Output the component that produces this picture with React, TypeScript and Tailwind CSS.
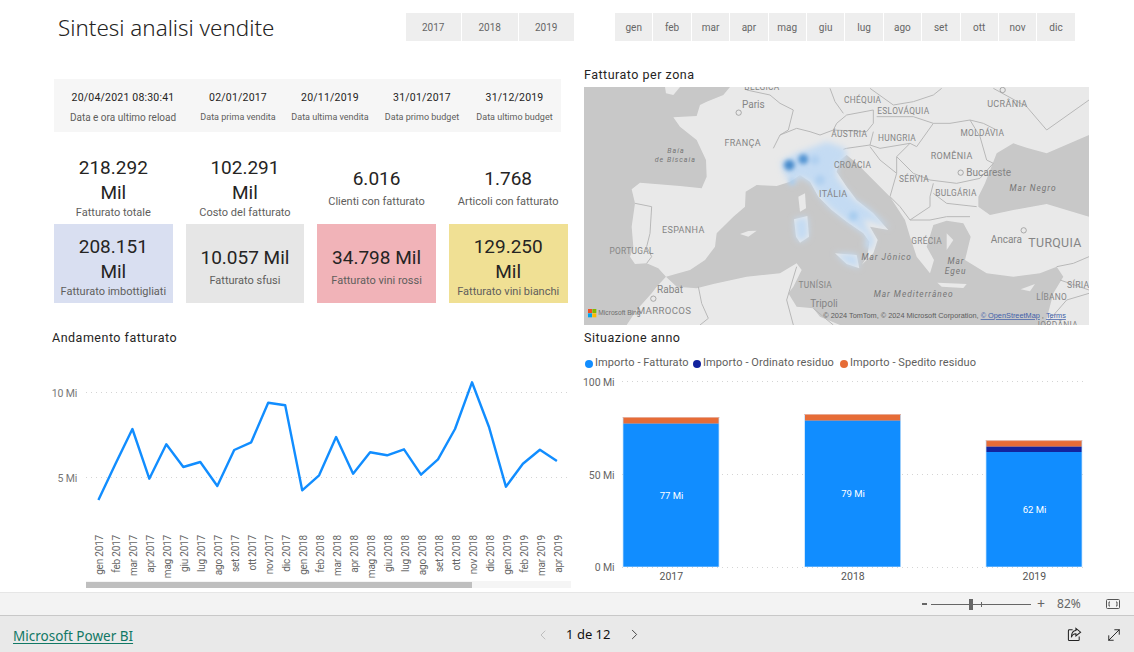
import React from "react";
import { ChevronLeft, ChevronRight, MoveDiagonal } from "lucide-react";

const din = "font-['Roboto',sans-serif]";
const years = ["2017", "2018", "2019"];
const months = ["gen", "feb", "mar", "apr", "mag", "giu", "lug", "ago", "set", "ott", "nov", "dic"];

const infos = [
  { value: "20/04/2021 08:30:41", label: "Data e ora ultimo reload", w: "w-[138px]", size: "text-[10px]" },
  { value: "02/01/2017", label: "Data prima vendita", w: "w-[92px]", size: "text-[9px]" },
  { value: "20/11/2019", label: "Data ultima vendita", w: "w-[92px]", size: "text-[9px]" },
  { value: "31/01/2017", label: "Data primo budget", w: "w-[92px]", size: "text-[9px]" },
  { value: "31/12/2019", label: "Data ultimo budget", w: "w-[93px]", size: "text-[9px]" },
];

const kpis = [
  { value: "218.292 Mil", label: "Fatturato totale", bg: "bg-white", two: true },
  { value: "102.291 Mil", label: "Costo del fatturato", bg: "bg-white", two: true },
  { value: "6.016", label: "Clienti con fatturato", bg: "bg-white", two: false },
  { value: "1.768", label: "Articoli con fatturato", bg: "bg-white", two: false },
  { value: "208.151 Mil", label: "Fatturato imbottigliati", bg: "bg-[#d9dff1]", two: true },
  { value: "10.057 Mil", label: "Fatturato sfusi", bg: "bg-[#e6e6e6]", two: false },
  { value: "34.798 Mil", label: "Fatturato vini rossi", bg: "bg-[#f1b3b8]", two: false },
  { value: "129.250 Mil", label: "Fatturato vini bianchi", bg: "bg-[#f0e094]", two: true },
];

const linePoints = [
  500, 464, 429, 478.7, 444.3, 467, 462, 486, 450, 442.3, 402.7, 405.3, 490.3, 475.3, 437, 473.7, 452.3,
  455.3, 449.3, 474.7, 459.3, 429, 382.3, 426.7, 486.7, 463.7, 449.7, 461,
];
const lineLabels = [
  "gen 2017", "feb 2017", "mar 2017", "apr 2017", "mag 2017", "giu 2017", "lug 2017", "ago 2017", "set 2017",
  "ott 2017", "nov 2017", "dic 2017", "gen 2018", "feb 2018", "mar 2018", "apr 2018", "mag 2018", "giu 2018",
  "lug 2018", "ago 2018", "set 2018", "ott 2018", "nov 2018", "dic 2018", "gen 2019", "feb 2019", "mar 2019",
  "apr 2019",
];

const bars = [
  { x: 622.7, year: "2017", label: "77 Mi", top: 417, navy: 423.7, blue: 423.7, ly: 495.3 },
  { x: 804.3, year: "2018", label: "79 Mi", top: 414, navy: 420.7, blue: 420.7, ly: 493.7 },
  { x: 985.7, year: "2019", label: "62 Mi", top: 440.3, navy: 446.7, blue: 452, ly: 509.3 },
];

const borders = [
  "M580 265L600 225L650 205L690 215L720 225L760 210L860 215L880 190L880 150",
  "M600 225L625 210L640 150L600 130L570 105L500 90",
  "M880 150L800 165L770 190L760 210",
  "M750 85L765 125L790 160",
  "M870 85L940 135L1000 125L1060 105L1085 85",
  "M890 170L1000 170L1060 190L1110 190L1170 180L1210 190L1250 210",
  "M1060 190L1010 260L990 250L900 265L870 255L880 215",
  "M870 255L800 265L790 268",
  "M990 250L950 290L1000 340L1050 360L1130 370L1200 355L1240 310",
  "M1170 180L1200 230L1220 300L1240 310",
  "M950 290L950 340L930 410L960 440L990 480L1050 440L1050 410L1060 370",
  "M870 260L900 300L950 340",
  "M1060 400L1100 430L1190 440",
  "M990 480L1050 480L1100 470L1170 470",
  "M1430 620L1480 610L1527 590",
  "M1440 660L1527 690",
  "M165 430L215 440L210 520L200 560L215 590L200 610",
  "M355 680L365 730L385 775L360 795",
  "M650 620L620 720L640 795",
  "M700 745L760 795",
  "M1395 795L1460 720L1527 700",
  "M1240 85L1340 140L1400 210L1527 120",
];

function HeatMap() {
  return (
    <svg viewBox="12 81 1515 714" className="block h-[238px] w-[505px] bg-[#e9e9e9]">
      <defs>
        <filter id="soft" x="-5%" y="-5%" width="110%" height="110%">
          <feGaussianBlur stdDeviation="1" />
        </filter>
        <filter id="heat" x="-30%" y="-30%" width="160%" height="160%">
          <feGaussianBlur stdDeviation="10" />
        </filter>
        <filter id="spot" x="-80%" y="-80%" width="260%" height="260%">
          <feGaussianBlur stdDeviation="7" />
        </filter>
      </defs>
      <g filter="url(#soft)">
        {/* mare */}
        <path
          fill="#c8c8c8"
          d="M12 81L450 81L430 105L380 125L360 135L350 168L280 172L300 200L350 240L378 300L380 350L365 385L300 378L180 368L155 388L165 430L155 500L160 560L150 590L165 612L200 610L235 625L258 650L230 680L215 700L170 750L140 795L12 795Z"
        />
        <path
          fill="#c8c8c8"
          d="M258 650L330 630L375 600L405 560L410 520L460 470L495 440L497 395L530 375L590 378L630 365L660 345L690 365L715 410L755 450L800 485L850 520L868 545L862 590L845 615L880 580L893 540L870 500L925 510L880 460L830 420L800 380L770 335L780 300L800 285L830 310L880 360L930 410L975 480L990 530L1010 590L1050 640L1062 600L1040 560L1060 495L1100 482L1150 490L1172 530L1155 600L1220 640L1300 650L1380 640L1430 620L1450 650L1420 700L1395 795L780 795L720 770L700 745L650 740L625 700L640 680L665 630L650 610L600 640L500 650L400 672L350 685L290 680Z"
        />
        <path
          fill="#c8c8c8"
          d="M1195 410L1215 370L1250 280L1300 250L1345 265L1400 280L1527 225L1527 470L1400 432L1300 450L1230 465L1195 440Z"
        />
        {/* isole */}
        <path fill="#e9e9e9" d="M255 81L300 81L280 105L258 100Z" />
        <path fill="#e9e9e9" d="M655 410L675 400L678 445L660 455Z" />
        <path fill="#e9e9e9" d="M642 478L682 468L687 530L660 548L648 530Z" />
        <path fill="#e9e9e9" d="M765 580L830 585L838 625L800 612Z" />
        <path fill="#e9e9e9" d="M480 522L505 513L530 512L505 530Z" />
        <path fill="#e9e9e9" d="M1072 668L1160 672L1150 684L1085 680Z" />
        <path fill="#e9e9e9" d="M1322 688L1365 672L1350 694Z" />
        <path fill="#e9e9e9" d="M1100 520L1120 540L1100 570Z" />
        {borders.map((d, i) => (
          <path key={i} d={d} fill="none" stroke="#b8b8b8" strokeWidth="3" />
        ))}
      </g>
      {/* densita fatturato */}
      <g filter="url(#heat)" fill="#c4dbf3">
        <path d="M690 265L740 245L795 265L800 295L770 320L770 350L795 385L825 420L865 445L930 505L895 492L860 478L852 485L884 540L872 572L855 565L858 525L800 485L745 440L712 400L695 370L660 350L635 375L608 330L603 305L650 280Z" />
        <path d="M766 580L830 583L838 624L800 612Z" />
        <path d="M643 478L682 470L685 530L660 547L648 530Z" />
      </g>
      <g filter="url(#spot)">
        <circle cx="628" cy="315" r="16" fill="#4a8ccc" />
        <circle cx="670" cy="298" r="15" fill="#5595d3" />
        <circle cx="820" cy="468" r="14" fill="#a9cdef" />
        <circle cx="720" cy="360" r="15" fill="#b0d0f0" />
        <circle cx="705" cy="300" r="14" fill="#b0d0f0" />
        <circle cx="636" cy="366" r="9" fill="#a8cbec" />
      </g>
      <g className="font-['Roboto',sans-serif]" fill="#858585" textAnchor="middle" fontSize="25" letterSpacing="1">
        <text x="546" y="90">BÉLGICA</text>
        <text x="848" y="128">CHÉQUIA</text>
        <text x="970" y="163">ESLOVÁQUIA</text>
        <text x="1282" y="140" fontSize="27">UCRÂNIA</text>
        <text x="808" y="232">ÁUSTRIA</text>
        <text x="951" y="242">HUNGRIA</text>
        <text x="1207" y="227">MOLDÁVIA</text>
        <text x="488" y="259" fontSize="27">FRANÇA</text>
        <text x="1115" y="298" fontSize="27">ROMÊNIA</text>
        <text x="818" y="325">CROÁCIA</text>
        <text x="1002" y="365">SÉRVIA</text>
        <text x="1128" y="409">BULGÁRIA</text>
        <text x="760" y="412" fontSize="27">ITÁLIA</text>
        <text x="310" y="520" fontSize="27">ESPANHA</text>
        <text x="155" y="582">PORTUGAL</text>
        <text x="1040" y="552">GRÉCIA</text>
        <text x="706" y="683">TUNÍSIA</text>
        <text x="1415" y="720">LÍBANO</text>
        <text x="1495" y="683" fontSize="26">SÍRIA</text>
        <text x="1425" y="560" fontSize="37">TURQUIA</text>
        <text x="252" y="761" fontSize="29">MARROCOS</text>
        <text x="1430" y="803">JORDÂNIA</text>
        <text x="520" y="143" fontSize="30" letterSpacing="0">Paris</text>
        <text x="1226" y="348" fontSize="30" letterSpacing="0">Bucareste</text>
        <text x="1279" y="548" fontSize="30" letterSpacing="0">Ancara</text>
        <text x="270" y="700" fontSize="30" letterSpacing="0">Rabat</text>
        <text x="732" y="741" fontSize="30" letterSpacing="0">Tripoli</text>
      </g>
      <g className="font-['Roboto',sans-serif]" fill="#757575" textAnchor="middle" fontSize="25" fontStyle="italic" letterSpacing="3">
        <text x="288" y="278" fontSize="21">Baía</text>
        <text x="286" y="305" fontSize="21">de Biscaia</text>
        <text x="1359" y="394">Mar Negro</text>
        <text x="920" y="601">Mar Jônico</text>
        <text x="1128" y="611">Mar</text>
        <text x="1127" y="641">Egeu</text>
        <text x="1001" y="710">Mar Mediterrâneo</text>
      </g>
      <g fill="none" stroke="#8a8a8a" strokeWidth="2">
        <circle cx="476" cy="158" r="8" />
        <circle cx="1142" cy="338" r="8" />
        <circle cx="1331" cy="511" r="8" />
        <circle cx="220" cy="716" r="8" />
        <circle cx="1268" cy="90" r="8" />
      </g>
      {/* logo e attribuzione */}
      <rect x="24" y="747" width="12" height="12" fill="#f25022" />
      <rect x="37" y="747" width="12" height="12" fill="#7fba00" />
      <rect x="24" y="760" width="12" height="12" fill="#00a4ef" />
      <rect x="37" y="760" width="12" height="12" fill="#ffb900" />
      <text x="55" y="766" fontSize="20" fill="#6e6e6e" className="font-['Liberation_Sans',sans-serif]">Microsoft Bing</text>
      <text x="730" y="774" fontSize="22" fill="#5c5c5c" className="font-['Liberation_Sans',sans-serif]">
        © 2024 TomTom, © 2024 Microsoft Corporation,{" "}
        <tspan fill="#3f5fa8" textDecoration="underline">© OpenStreetMap</tspan>
        {" , "}
        <tspan fill="#3f5fa8" textDecoration="underline">Terms</tspan>
      </text>
    </svg>
  );
}

function TrendChart() {
  const path = linePoints.map((y, i) => `${i ? "L" : "M"}${(98.4 + i * 16.98).toFixed(1)} ${y}`).join("");
  return (
    <svg viewBox="54 347 520 234" className={`block h-[234px] w-[520px] overflow-visible ${din}`}>
      <g stroke="#d4d4d4" strokeDasharray="1 4">
        <line x1="86" x2="570" y1="392.5" y2="392.5" />
        <line x1="86" x2="570" y1="477.5" y2="477.5" />
      </g>
      <text x="77" y="397" textAnchor="end" fontSize="10.5" letterSpacing="-0.2" fill="#777">10 Mi</text>
      <text x="77" y="482" textAnchor="end" fontSize="10.5" letterSpacing="-0.2" fill="#777">5 Mi</text>
      <path d={path} fill="none" stroke="#118dff" strokeWidth="2.4" strokeLinejoin="round" />
      {lineLabels.map((label, i) => (
        <text
          key={label}
          transform={`translate(${(103 + i * 16.98).toFixed(1)} 535) rotate(-90)`}
          textAnchor="end"
          fontSize="10"
          letterSpacing="-0.2"
          fill="#666"
        >
          {label}
        </text>
      ))}
    </svg>
  );
}

function YearChart() {
  return (
    <svg viewBox="584 371 505 221" className={`block h-[221px] w-[505px] overflow-visible ${din}`}>
      <g stroke="#d4d4d4" strokeDasharray="1 4">
        <line x1="622" x2="1084" y1="381.5" y2="381.5" />
        <line x1="622" x2="1084" y1="474.5" y2="474.5" />
        <line x1="622" x2="1084" y1="567.5" y2="567.5" />
      </g>
      <g fontSize="10.5" fill="#666" textAnchor="end" letterSpacing="-0.1">
        <text x="614.5" y="385.5">100 Mi</text>
        <text x="614.5" y="478.5">50 Mi</text>
        <text x="614.5" y="571">0 Mi</text>
      </g>
      {bars.map((b) => (
        <g key={b.year}>
          <rect x={b.x} y={b.top} width="96.6" height={567 - b.top} fill="#b9dcfc" />
          <rect x={b.x + 0.7} y={b.top + 0.7} width="95.2" height={b.navy - b.top - 0.7} fill="#e66c37" />
          <rect x={b.x} y={b.top} width="96.6" height="0.8" fill="#f0a587" />
          <rect x={b.x + 0.7} y={b.navy} width="95.2" height={b.blue - b.navy} fill="#12239e" />
          <rect x={b.x + 0.7} y={b.blue} width="95.2" height={566.6 - b.blue} fill="#118dff" />
          <text x={b.x + 48.8} y={b.ly + 3.5} textAnchor="middle" fontSize="9.5" fill="#fff">{b.label}</text>
          <text x={b.x + 48.6} y="580" textAnchor="middle" fontSize="10.5" fill="#555">{b.year}</text>
        </g>
      ))}
    </svg>
  );
}

export default function App() {
  return (
    <div className="flex h-[652px] w-[1134px] flex-col overflow-hidden bg-white">
      <main className="flex h-[592px] gap-[10px] pl-[54px]">
        <section className="w-[520px] pt-[13px]">
          <div className="flex h-[28px] items-center">
            <h1 className="ml-[4px] mt-[1px] font-['Noto_Sans',sans-serif] text-[22.4px] font-light text-[#252423]">Sintesi analisi vendite</h1>
            <div className="ml-auto flex gap-[1px]">
              {years.map((y) => (
                <div key={y} className={`flex h-[28px] w-[55.5px] items-center justify-center bg-[#eeeeee] text-[10px] text-[#666] ${din}`}>
                  {y}
                </div>
              ))}
            </div>
          </div>

          <div className={`mt-[38px] flex h-[53px] w-[507px] bg-[#f6f6f6] ${din}`}>
            {infos.map((info) => (
              <div key={info.value} className={`flex flex-col items-center pt-[11px] ${info.w}`}>
                <span className="text-[10.5px] leading-[16px] tracking-[0.2px] text-[#252423]">{info.value}</span>
                <span className={`mt-[4px] whitespace-nowrap leading-[15px] text-[#605e5c] ${info.size}`}>{info.label}</span>
              </div>
            ))}
          </div>

          <div className={`mt-[13px] grid w-[513.5px] grid-cols-4 gap-x-[13px] ${din}`}>
            {kpis.map((k) => (
              <div key={k.label} className={`flex h-[79px] flex-col items-center justify-center pt-[6px] text-center ${k.bg}`}>
                <span className={k.two ? "w-[80px] text-[19px] leading-[25px] text-[#252423]" : "mb-[3px] w-[100px] text-[19px] leading-[25px] text-[#252423]"}>
                  {k.value}
                </span>
                <span className="whitespace-nowrap text-[11px] leading-[16px] text-[#605e5c]">{k.label}</span>
              </div>
            ))}
          </div>

          <h2 className={`-ml-[2px] mt-[26px] text-[12.5px] leading-[18px] tracking-[0.5px] text-[#252423] ${din}`}>Andamento fatturato</h2>
          <TrendChart />
          <div className="ml-[32px] h-[7px] w-[485px] bg-[#f5f5f5] pt-[1px]">
            <div className="h-[6px] w-[386px] bg-[#bfbfbf]" />
          </div>
        </section>

        <section className="w-[505px] pt-[13px]">
          <div className="ml-[31px] flex gap-[1px]">
            {months.map((m) => (
              <div key={m} className={`flex h-[28px] w-[37.4px] items-center justify-center bg-[#eeeeee] text-[10px] text-[#666] ${din}`}>
                {m}
              </div>
            ))}
          </div>
          <h2 className={`mt-[25px] text-[12.5px] leading-[18px] tracking-[0.5px] text-[#252423] ${din}`}>Fatturato per zona</h2>
          <div className="mt-[3px]">
            <HeatMap />
          </div>
          <h2 className={`mt-[4px] text-[12.5px] leading-[18px] tracking-[0.5px] text-[#252423] ${din}`}>Situazione anno</h2>
          <div className={`mt-[8px] flex h-[16px] items-center whitespace-nowrap pt-[1px] text-[11px] tracking-[0.1px] text-[#605e5c] ${din}`}>
            <div className="flex w-[109px] shrink-0 items-center gap-[2px] pl-[1px]">
              <span className="h-[8px] w-[8px] shrink-0 rounded-full bg-[#118dff]" />
              Importo - Fatturato
            </div>
            <div className="flex w-[147px] shrink-0 items-center gap-[2px]">
              <span className="h-[8px] w-[8px] shrink-0 rounded-full bg-[#12239e]" />
              Importo - Ordinato residuo
            </div>
            <div className="flex shrink-0 items-center gap-[2px]">
              <span className="h-[8px] w-[8px] shrink-0 rounded-full bg-[#e66c37]" />
              Importo - Spedito residuo
            </div>
          </div>
          <YearChart />
        </section>
      </main>

      <div className="flex h-[24px] items-center border-y border-t-[#e6e6e6] border-b-[#c8c8c8] bg-[#f3f3f3] font-['Noto_Sans',sans-serif]">
        <div className="ml-[922px] h-[2px] w-[5px] bg-[#666]" />
        <div className="relative ml-[4px] h-[1px] w-[100px] bg-[#666]">
          <div className="absolute left-[38px] top-[-5px] h-[11px] w-[4px] bg-[#666]" />
          <div className="absolute left-[50px] top-[-2px] h-[5px] w-[1px] bg-[#666]" />
        </div>
        <span className="ml-[6px] text-[14px] leading-none text-[#666]">+</span>
        <span className="ml-[12px] text-[12px] text-[#666]">82%</span>
        <svg viewBox="0 0 14 10" className="ml-[25px] h-[10px] w-[14px]" fill="none" stroke="#555" strokeWidth="1">
          <rect x="0.5" y="0.5" width="13" height="9" rx="1" />
          <path d="M4 3H3V7H4M10 3H11V7H10" />
        </svg>
      </div>

      <footer className="flex flex-1 items-center bg-[#e9e9e9] pt-[1px] font-['Noto_Sans',sans-serif]">
        <a className="ml-[13px] mt-[3px] text-[13.5px] text-[#117865] underline underline-offset-2">Microsoft Power BI</a>
        <ChevronLeft className="ml-[402px] h-[16px] w-[16px] text-[#b5b5b5]" strokeWidth={1.25} />
        <span className="ml-[15px] text-[13px] text-[#111]">1 de 12</span>
        <ChevronRight className="ml-[16px] h-[17px] w-[17px] text-[#333]" strokeWidth={1.25} />
        <svg viewBox="0 0 16 16" className="ml-[424px] h-[15px] w-[15px]" fill="none" stroke="#222" strokeWidth="1.1">
          <path d="M6 3H2.5A1 1 0 0 0 1.5 4V13.5A1 1 0 0 0 2.5 14.5H12A1 1 0 0 0 13 13.5V10" />
          <path d="M9.5 1.5L14.5 5.5L9.5 9.5V7.3C7 7.3 5.5 8.5 4.7 11C4.7 7 6.5 4 9.5 3.8Z" />
        </svg>
        <MoveDiagonal className="ml-[23px] h-[18px] w-[18px] text-[#222]" strokeWidth={1.25} />
      </footer>
    </div>
  );
}
